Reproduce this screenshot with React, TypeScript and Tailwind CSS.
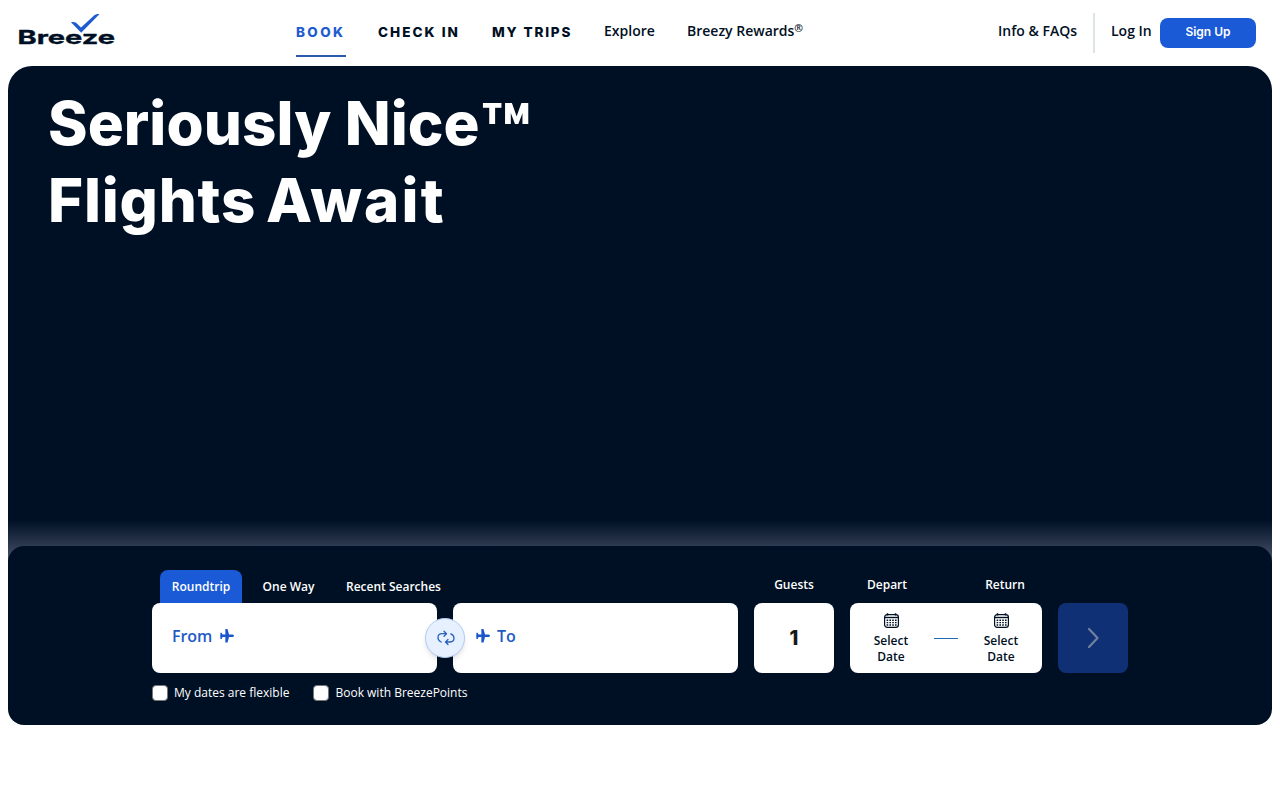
import type { ReactNode } from 'react';

const Logo = () => (
  <svg className="block w-24 h-8 overflow-visible" viewBox="0 0 96 32" fill="none" aria-label="Breeze">
    <text
      x="-1.5"
      y="29.8"
      textLength="97.5"
      lengthAdjust="spacingAndGlyphs"
      className="fill-[#001024] stroke-[#001024] font-['Inter'] text-[18.5px] font-bold"
      strokeWidth=".35"
    >
      Breeze
    </text>
    <path
      d="M52 8.3C55 7.6 57 8.3 58.4 10L62 13.4L74.5 2C76.3.4 78-.1 80.6.1L62.2 18.8Z"
      fill="#1E5BD0"
    />
  </svg>
);

const PlaneIcon = () => (
  <svg className="block w-3.5 h-3.5" viewBox="0 0 14 14" fill="#1A56CC">
    <path d="M5.3.4C5.3.1 5.5 0 5.8 0H7C7.4 0 7.6.2 7.7.6L9 5.5H12.4C13.4 5.6 14 6.2 14 6.8C14 7.4 13.4 8 12.4 8.1H9L7.7 13C7.6 13.4 7.4 13.6 7 13.6H5.8C5.5 13.6 5.3 13.5 5.3 13.2L5.4 8.1H2.6L1.6 9.9H.4V7.6L0 6.8L.4 6V3.7H1.6L2.6 5.5H5.4Z" />
  </svg>
);

const SwapIcon = () => (
  <svg
    className="block w-[18px] h-4"
    viewBox="0 0 18 16"
    fill="none"
    stroke="#2860BC"
    strokeWidth="1.3"
    strokeLinecap="round"
    strokeLinejoin="round"
  >
    <path d="M4.2 12C2 11.2 1 9.5 1 7.6C1 5.2 2.8 3.7 5 3.7H9.3M7 1.2L9.5 3.7L7 6.2" />
    <path d="M13.8 3.8C16 4.6 17 6.2 17 8.1C17 10.5 15.2 12 13 12H8.7M11 9.5L8.5 12L11 14.5" />
  </svg>
);

const CalendarIcon = () => (
  <svg className="block w-[15px] h-[15px]" viewBox="0 0 15 15" fill="none" stroke="#001024">
    <rect x=".6" y="1.6" width="13.8" height="12.8" rx="2.6" strokeWidth="1.2" />
    <path d="M.6 4.5H14.4" strokeWidth="1.4" />
    <path d="M3.5.2V2.6M11.5.2V2.6" strokeWidth="1.5" />
    <path
      d="M2.6 7.2H12.6M2.6 9.6H12.6M2.6 12H12.6"
      strokeWidth="1.4"
      strokeDasharray="1.6 1.2"
    />
  </svg>
);

const DateColumn = () => (
  <button className="w-[82px] flex flex-col items-center pt-2.5">
    <CalendarIcon />
    <span className="mt-[5px] w-10 text-center text-xs leading-4 font-semibold text-[#001024]">
      Select Date
    </span>
  </button>
);

const CheckOption = ({ children }: { children: ReactNode }) => (
  <label className="flex items-center gap-1.5 text-xs text-white">
    <span className="w-4 h-4 rounded-[4px] border border-[#767676] bg-white" />
    <span>{children}</span>
  </label>
);

export default function App() {
  return (
    <div className="h-[800px] overflow-hidden bg-white font-['Open_Sans',sans-serif] text-[#001024]">
      <header className="h-[66px] flex items-start pl-[19px] pr-6">
        <a className="mt-3.5 w-[277px]">
          <Logo />
        </a>
        <nav className="flex gap-8 text-sm font-semibold whitespace-nowrap">
          <a className="mt-[21px] w-[50px] h-9 border-b-2 border-[#2B5BAD] font-['Inter'] text-[13.5px] font-extrabold leading-[22px] tracking-[2.4px] text-[#1E5BD0]">
            BOOK
          </a>
          <a className="mt-[21px] w-[82px] font-['Inter'] text-[13.5px] font-extrabold leading-[22px] tracking-[2.05px]">
            CHECK IN
          </a>
          <a className="mt-[21px] w-20 font-['Inter'] text-[13.5px] font-extrabold leading-[22px] tracking-[1.85px]">
            MY TRIPS
          </a>
          <a className="mt-5 w-[51px] leading-[22px]">Explore</a>
          <a className="mt-5 leading-[22px]">
            Breezy Rewards<sup className="text-[10.5px] -top-[4px]">®</sup>
          </a>
        </nav>
        <div className="ml-auto flex items-start text-sm font-semibold whitespace-nowrap">
          <a className="mt-5 leading-[22px]">Info &amp; FAQs</a>
          <span className="mt-[13px] ml-4 mr-4 w-0.5 h-10 bg-[#DEE3E5]" />
          <a className="mt-5 w-[41px] leading-[22px]">Log In</a>
          <button className="mt-[18px] ml-2 w-24 h-[30px] rounded-lg bg-[#1A5AD7] pb-0.5 font-['Inter'] text-xs font-semibold text-white">
            Sign Up
          </button>
        </div>
      </header>

      <main className="mx-2">
        <section className="h-[500px] flex flex-col justify-between rounded-t-3xl bg-[#001024]">
          <h1 className="pt-[19px] pl-10 font-['Inter'] text-[60px] leading-[77px] font-extrabold text-white whitespace-nowrap">
            <span className="block h-[77px] tracking-[0.1px]">
              Seriously Nice
              <span className="align-[-16px] text-[80px] leading-[0]">™</span>
            </span>
            <span className="block tracking-[0.8px] [word-spacing:-4px]">
              Flights <span className="tracking-[2.2px]">Await</span>
            </span>
          </h1>
          <div className="h-[46px] bg-linear-to-b from-transparent to-[#515B73]" />
        </section>

        <section className="relative -mt-5 h-[179px] rounded-2xl bg-[#001024] pt-6">
          <div className="mx-auto w-[976px]">
            <div className="flex h-[33px] text-xs font-semibold text-white whitespace-nowrap">
              <div className="ml-2 w-[594px] flex leading-[33px]">
                <button className="w-[82px] rounded-t-lg bg-[#1A5AD7]">Roundtrip</button>
                <button className="ml-5 w-[53px]">One Way</button>
                <button className="ml-[31px] w-[95px]">Recent Searches</button>
              </div>
              <span className="w-20 text-center leading-[29px]">Guests</span>
              <span className="ml-3 w-[82px] text-center leading-[29px]">Depart</span>
              <span className="ml-9 w-[82px] text-center leading-[29px]">Return</span>
            </div>

            <div className="flex gap-4 h-[70px]">
              <div className="relative flex gap-4">
                <button className="w-[285px] flex gap-2 rounded-lg bg-white pt-[21px] pl-5 text-base font-semibold text-[#1F5BC4]">
                  <span className="tracking-[-0.1px]">From</span>
                  <span className="pt-[5px]">
                    <PlaneIcon />
                  </span>
                </button>
                <button className="w-[285px] flex gap-[7px] rounded-lg bg-white pt-[21px] pl-[23px] text-base font-semibold text-[#1F5BC4]">
                  <span className="pt-[5px]">
                    <PlaneIcon />
                  </span>
                  <span>To</span>
                </button>
                <button className="absolute left-[273px] top-[15px] w-10 h-10 flex items-center justify-center rounded-full border border-[#B1CDF5] bg-[#E6F0FF] pl-px shadow-md">
                  <SwapIcon />
                </button>
              </div>
              <button className="w-20 rounded-lg bg-white font-['Inter'] text-xl font-extrabold text-[#171717]">
                1
              </button>
              <div className="w-48 flex items-start rounded-lg bg-white">
                <DateColumn />
                <span className="mx-0.5 mt-[35px] w-6 h-px bg-[#206BB0]" />
                <DateColumn />
              </div>
              <button className="w-[70px] flex items-center justify-center rounded-lg bg-[#0F3075]">
                <svg
                  className="w-3 h-[22px]"
                  viewBox="0 0 12 22"
                  fill="none"
                  stroke="#7180A0"
                  strokeWidth="2.2"
                  strokeLinecap="round"
                  strokeLinejoin="round"
                >
                  <path d="M2 2L10.5 11L2 20" />
                </svg>
              </button>
            </div>

            <div className="mt-3 flex gap-6">
              <CheckOption>My dates are flexible</CheckOption>
              <CheckOption>Book with BreezePoints</CheckOption>
            </div>
          </div>
        </section>
      </main>
    </div>
  );
}
